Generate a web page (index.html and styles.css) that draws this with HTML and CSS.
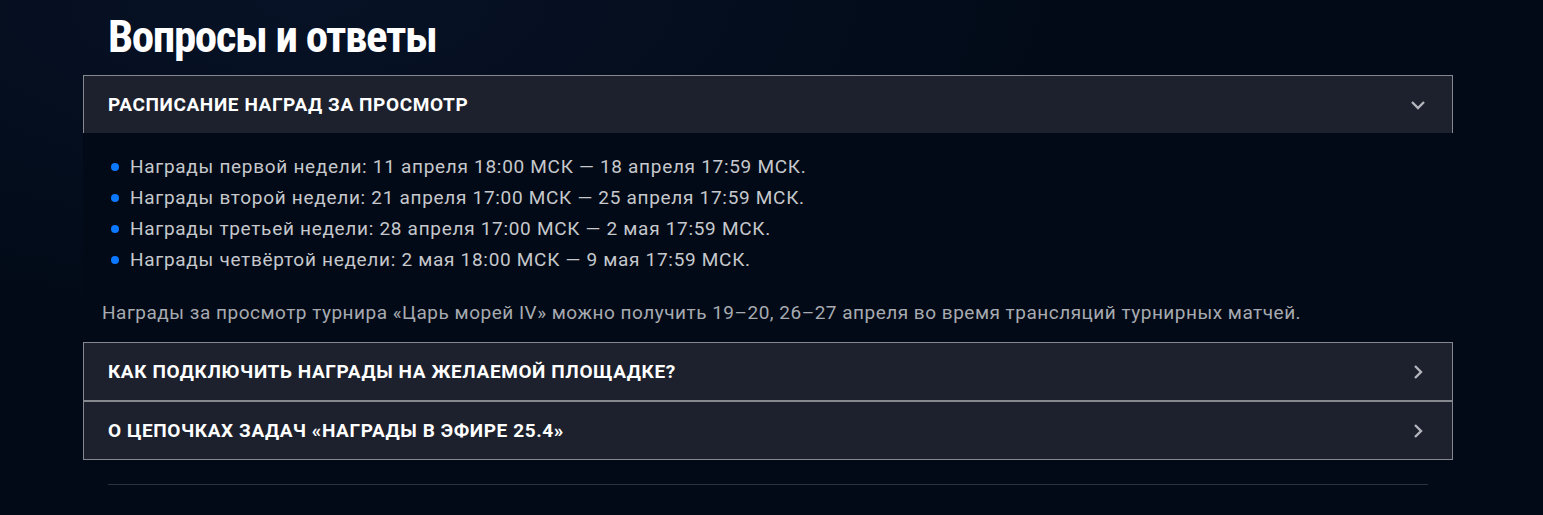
FILE: index.html
```html
<!DOCTYPE html>
<html lang="ru">
  <head>
    <meta charset="UTF-8" />
    <meta name="viewport" content="width=device-width, initial-scale=1.0" />
    <title>Вопросы и ответы</title>
    <link rel="stylesheet" href="styles.css">
  </head>
  <body>
    <section class="faq">
      <h2 class="faqTitle">Вопросы и ответы</h2>

      <div class="faqItem open">
        <div class="faqHead">
          <span>Расписание наград за просмотр</span>
          <svg class="arrow" width="16" height="16" viewBox="0 0 16 16">
            <path d="M2 5l6 6 6-6" fill="none" stroke="currentColor" stroke-width="2.4" />
          </svg>
        </div>
        <div class="faqBody">
          <ul class="dates">
            <li>Награды первой недели: 11 апреля 18:00 МСК — 18 апреля 17:59 МСК.</li>
            <li>Награды второй недели: 21 апреля 17:00 МСК — 25 апреля 17:59 МСК.</li>
            <li>Награды третьей недели: 28 апреля 17:00 МСК — 2 мая 17:59 МСК.</li>
            <li>Награды четвёртой недели: 2 мая 18:00 МСК — 9 мая 17:59 МСК.</li>
          </ul>
          <p class="note">Награды за просмотр турнира «Царь морей IV» можно получить 19–20, 26–27 апреля во время трансляций турнирных матчей.</p>
        </div>
      </div>

      <div class="faqItem">
        <div class="faqHead">
          <span>Как подключить награды на желаемой площадке?</span>
          <svg class="arrow" width="16" height="16" viewBox="0 0 16 16">
            <path d="M5 2l6 6-6 6" fill="none" stroke="currentColor" stroke-width="2.4" />
          </svg>
        </div>
      </div>
      <div class="faqItem">
        <div class="faqHead">
          <span>О цепочках задач «Награды в эфире 25.4»</span>
          <svg class="arrow" width="16" height="16" viewBox="0 0 16 16">
            <path d="M5 2l6 6-6 6" fill="none" stroke="currentColor" stroke-width="2.4" />
          </svg>
        </div>
      </div>

      <hr class="divider" />
    </section>
  </body>
</html>
```

FILE: styles.css
```css
body {
  margin: 0;
  background: #020a17;
  background-image: radial-gradient(ellipse at 20% 0%, #071226 0%, #020a17 45%),
    linear-gradient(#020a17, #030b19);
  font-family: Roboto, "Noto Sans", sans-serif;
  color: #fff;
  min-height: 515px;
}
.faq {
  width: 1370px;
  margin-left: 83px;
  padding-top: 10px;
}
.faqTitle {
  margin: 0 0 11px 25px;
  font-size: 45px;
  line-height: 54px;
  font-weight: 700;
  font-stretch: 80%;
  letter-spacing: -1.4px;
}
.faqItem {
  border: 1px solid #85888e;
  background: #1d212d;
}
.faqItem.open {
  margin-bottom: 8px;
}
.faqHead {
  display: flex;
  justify-content: space-between;
  align-items: center;
  height: 57px;
  padding: 0 26px 0 24px;
  font-size: 19px;
  font-weight: 700;
  letter-spacing: 0.6px;
  text-transform: uppercase;
}
.arrow {
  color: #b3b6bd;
}
.faqBody {
  background: #020a17;
  margin: 0 -1px -1px;
  padding: 18px 0 9px;
}
.dates {
  list-style: none;
  margin: 0;
  padding: 0 0 0 28px;
}
.dates li {
  position: relative;
  padding-left: 19px;
  font-size: 19px;
  line-height: 31px;
  letter-spacing: 0.7px;
  color: #c6c8cc;
}
.dates li::before {
  content: "";
  position: absolute;
  left: 0;
  top: 12px;
  width: 8px;
  height: 8px;
  border-radius: 50%;
  background: #0b78ff;
}
.note {
  margin: 26px 0 0 19px;
  font-size: 19px;
  line-height: 24px;
  letter-spacing: 0.5px;
  color: #a7aab0;
}
.divider {
  margin: 24px 25px 0;
  border: 0;
  border-top: 1px solid #2c3240;
}
```
